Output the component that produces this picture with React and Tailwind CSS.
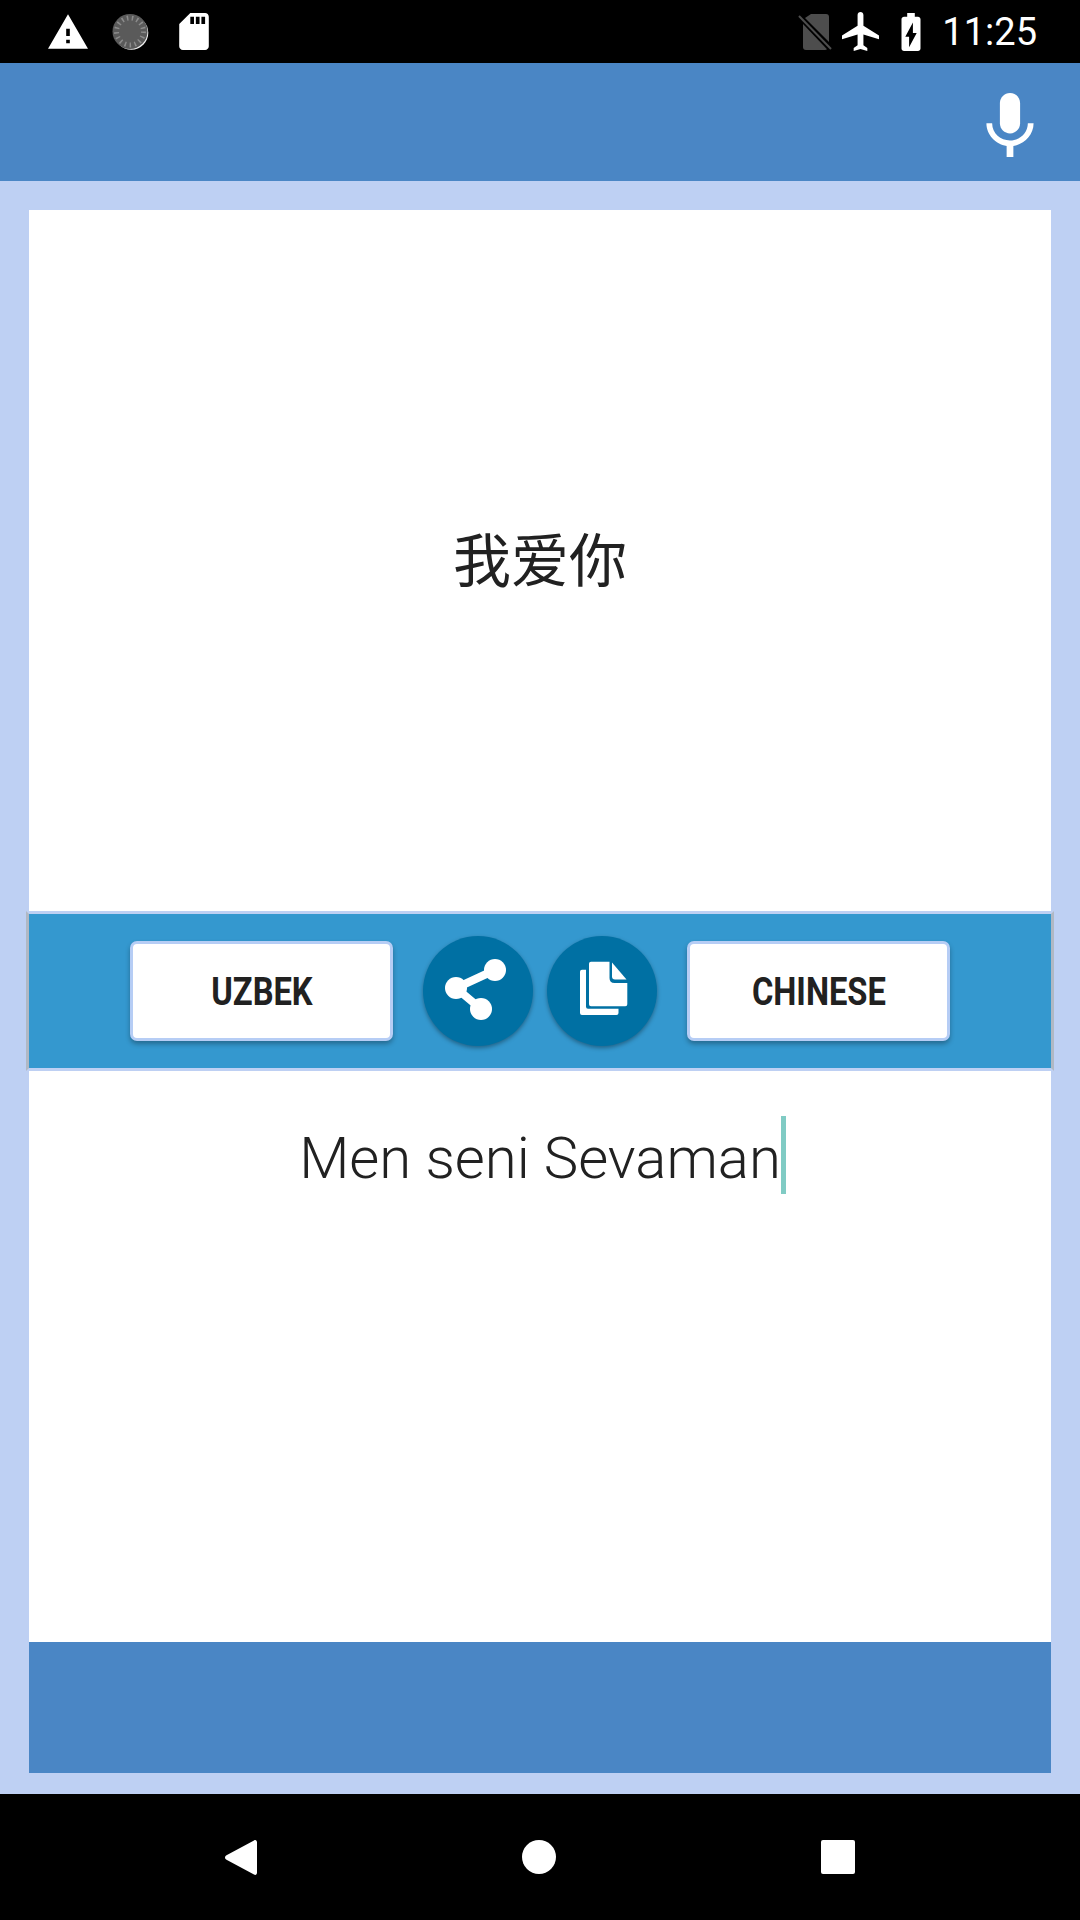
import React from 'react';

const Warning = () => (
  <svg viewBox="1 2 22 19" className="w-[40px] h-[35px] fill-white">
    <path d="M1 21h22L12 2 1 21zm12-3h-2v-2h2v2zm0-4h-2v-4h2v4z" />
  </svg>
);

const Sync = () => (
  <svg viewBox="0 0 38 36" className="w-[38px] h-[36px]">
    <circle cx="19.300" cy="18.800" r="17" fill="#f0f0f0" />
    <circle cx="18" cy="17.500" r="17.500" fill="#5a5a5a" />
    <circle cx="18" cy="17.500" r="13.500" fill="none" stroke="#8c8c8c" strokeWidth="5" strokeDasharray="1.500 3.500" />
  </svg>
);

const SdCard = () => (
  <svg viewBox="4 2 16 20" className="w-[30px] h-[37px] fill-white">
    <path d="M18 2h-8L4.020 8 4 20c0 1.100.9 2 2 2h12c1.100 0 2-.9 2-2V4c0-1.100-.9-2-2-2zm-6 6h-2V4h2v4zm3 0h-2V4h2v4zm3 0h-2V4h2v4z" />
  </svg>
);

const NoSim = () => (
  <svg viewBox="0 0 34 36" className="w-[34px] h-[36px]">
    <path d="M13 0h15a3 3 0 0 1 3 3v25L7 4z" fill="#4d4d4d" />
    <path d="M5 10v23a3 3 0 0 0 3 3h19a3 3 0 0 0 2-.8z" fill="#4d4d4d" />
    <path d="M1 2l32 33" stroke="#4d4d4d" strokeWidth="2" />
  </svg>
);

const Plane = () => (
  <svg viewBox="2 2 19 20" className="w-[37px] h-[39px] fill-white">
    <path d="M21 16v-2l-8-5V3.500c0-.83-.67-1.500-1.500-1.500S10 2.670 10 3.500V9l-8 5v2l8-2.500V19l-2 1.500V22l3.500-1 3.500 1v-1.500L13 19v-5.500l8 2.500z" />
  </svg>
);

const Battery = () => (
  <svg viewBox="7 2 10 20" className="w-[22px] h-[38px] fill-white">
    <path d="M15.670 4H14V2h-4v2H8.330C7.600 4 7 4.600 7 5.330v15.330C7 21.400 7.600 22 8.330 22h7.330c.74 0 1.340-.6 1.340-1.330V5.330C17 4.600 16.400 4 15.670 4zM11 20v-5.500H9L13 7v5.500h2L11 20z" />
  </svg>
);

const Mic = () => (
  <svg viewBox="5 2 14 19" className="w-[48px] h-[64px] fill-white">
    <path d="M12 14c1.660 0 3-1.340 3-3V5c0-1.660-1.340-3-3-3S9 3.340 9 5v6c0 1.660 1.340 3 3 3z" />
    <path d="M17.300 11c0 3-2.540 5.100-5.300 5.100S6.700 14 6.700 11H5c0 3.420 2.720 6.230 6 6.720V21h2v-3.280c3.280-.48 6-3.300 6-6.720h-1.700z" />
  </svg>
);

const Share = () => (
  <svg viewBox="0 0 110 110" className="w-[110px] h-[110px]">
    <path d="M72 34L33 52L58 73" fill="none" stroke="white" strokeWidth="8" />
    <circle cx="72" cy="34" r="11" fill="white" />
    <circle cx="33" cy="52" r="11" fill="white" />
    <circle cx="58" cy="73" r="11" fill="white" />
  </svg>
);

const Copy = () => (
  <svg viewBox="0 0 110 110" className="w-[110px] h-[110px] fill-white">
    <path d="M35 33.700h4v37a2 2 0 0 0 2 2h30.500v4.300a2 2 0 0 1-2 2H35a2 2 0 0 1-2-2V35.700a2 2 0 0 1 2-2z" />
    <path d="M44 25.700h18.500V42q0 5 5 5h12.800v21.300a2 2 0 0 1-2 2H44a2 2 0 0 1-2-2V27.700a2 2 0 0 1 2-2z" />
    <path d="M65 26.500L79.500 43.500H68q-3 0-3-3z" />
  </svg>
);

const LangButton = ({ label }) => (
  <button className="w-[263px] h-[100px] bg-white border-[3px] border-[#b6cdf5] rounded-[7px] shadow-[0_3px_5px_rgba(0,0,0,0.3)] flex items-center justify-center pt-[2px]">
    <span className="font-bold text-[38px] text-[#212121] scale-x-[0.86]">{label}</span>
  </button>
);

const RoundButton = ({ children }) => (
  <button className="w-[110px] h-[110px] rounded-full bg-[#0070a3] shadow-[0_2px_4px_rgba(0,0,0,0.35)] flex items-center justify-center">
    {children}
  </button>
);

export default function App() {
  return (
    <div className="w-[1080px] h-[1920px] flex flex-col overflow-hidden font-['Roboto',sans-serif]">
      {/* status bar */}
      <div className="h-[63px] bg-black flex items-center justify-between pl-[48px] pr-[43px]">
        <div className="flex items-center gap-[24px]">
          <Warning />
          <Sync />
          <div className="ml-[5px]"><SdCard /></div>
        </div>
        <div className="flex items-center">
          <NoSim />
          <div className="ml-[10px]"><Plane /></div>
          <div className="ml-[21px]"><Battery /></div>
          <span className="ml-[20px] text-white text-[38px] leading-none">11:25</span>
        </div>
      </div>

      {/* app bar */}
      <div className="h-[118px] bg-[#4a86c5] flex items-center justify-end pr-[46px] pt-[6px]">
        <Mic />
      </div>

      <div className="flex-1 bg-[#bed0f3] pt-[29px] pb-[21px] px-[29px] flex flex-col">
        <div className="h-[701px] bg-white flex items-center justify-center pb-[7px]">
          <span className="text-[58px] text-[#212121] font-['Noto_Sans_CJK_SC',sans-serif]">我爱你</span>
        </div>

        <div className="-mx-[3px] h-[160px] px-[3px] border-x-[3px] border-x-[#b0b8c4] border-y-[3px] border-y-[#bed0f3] bg-[#3498cf] flex items-center justify-center">
          <LangButton label="UZBEK" />
          <div className="ml-[30px]">
            <RoundButton><Share /></RoundButton>
          </div>
          <div className="ml-[14px]">
            <RoundButton><Copy /></RoundButton>
          </div>
          <div className="ml-[30px]">
            <LangButton label="CHINESE" />
          </div>
        </div>

        <div className="flex-1 bg-white flex justify-center pt-[45px]">
          <div className="relative">
            <span className="block text-[58px] leading-[84px] font-light text-[#212121]">Men seni Sevaman</span>
            <span className="absolute top-0 left-full w-[5px] h-[78px] bg-[#80cbc4]"></span>
          </div>
        </div>

        {/* ad strip */}
        <div className="h-[131px] bg-[#4a86c5]"></div>
      </div>

      {/* nav bar */}
      <div className="h-[126px] bg-black flex items-center justify-center">
        <svg viewBox="0 0 32 35" className="w-[32px] h-[35px] fill-white mr-[265px]">
          <path d="M29 .5c1.600-1 3 0 3 2v30c0 2-1.400 3-3 2L1.500 19.800c-2-1.200-2-3.400 0-4.600z" />
        </svg>
        <div className="w-[34px] h-[34px] rounded-full bg-white"></div>
        <div className="w-[34px] h-[34px] rounded-[2px] bg-white ml-[265px]"></div>
      </div>
    </div>
  );
}
